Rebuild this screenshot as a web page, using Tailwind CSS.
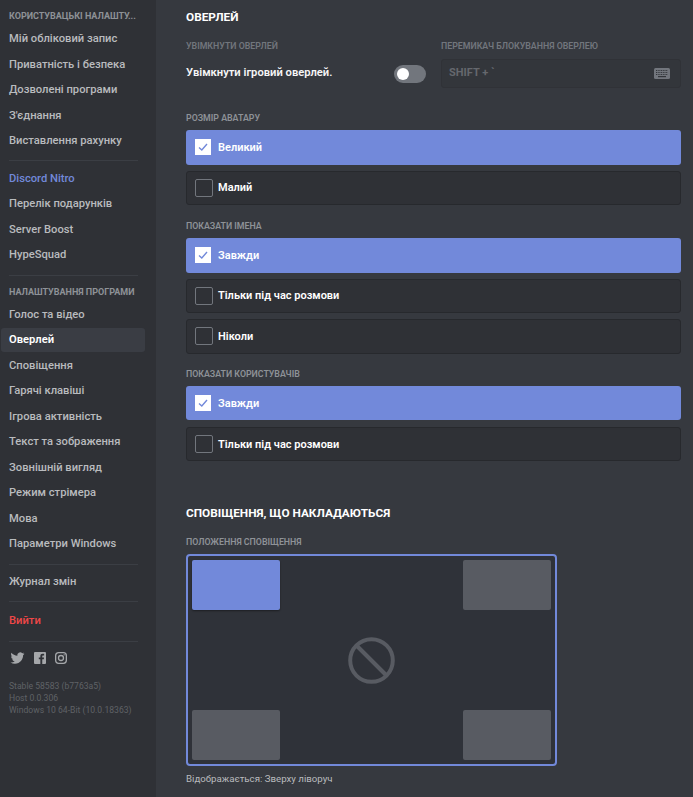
<!doctype html>
<html lang="uk"><head><meta charset="utf-8"><script src="https://cdn.jsdelivr.net/npm/@tailwindcss/browser@4"></script></head>
<body class="m-0 overflow-hidden bg-[#36393f]">
<div class="flex h-[797px] w-[693px] overflow-hidden font-['Roboto','Noto_Sans',sans-serif]">
<nav class="w-[156px] shrink-0 h-full bg-[#2f3136] pl-[1px] pr-[11px] pt-[10px] text-[11.2px] font-medium text-[#b9bbbe]">
  <div class="h-[13px] pl-[8px] text-[9px] font-bold leading-[13px] text-[#8e9297] whitespace-nowrap">КОРИСТУВАЦЬКІ НАЛАШТУ...</div>
  <div class="mt-[4px] flex flex-col gap-[2px] [&>div]:h-[23.5px] [&>div]:pl-[8px] [&>div]:leading-[23.5px]">
    <div>Мій обліковий запис</div><div>Приватність і безпека</div><div>Дозволені програми</div><div>З'єднання</div><div>Виставлення рахунку</div>
  </div>
  <div class="ml-[8px] mr-[7px] mt-[7px] h-px bg-[#3b3e44]"></div>
  <div class="mt-[6px] flex flex-col gap-[2px] [&>div]:h-[23.5px] [&>div]:pl-[8px] [&>div]:leading-[23.5px]">
    <div class="text-[#7289da]">Discord Nitro</div><div>Перелік подарунків</div><div>Server Boost</div><div>HypeSquad</div>
  </div>
  <div class="ml-[8px] mr-[7px] mt-[8px] h-px bg-[#3b3e44]"></div>
  <div class="mt-[10px] h-[13px] pl-[8px] text-[9px] font-bold leading-[13px] text-[#8e9297] whitespace-nowrap">НАЛАШТУВАННЯ ПРОГРАМИ</div>
  <div class="mt-[4px] flex flex-col gap-[2px] [&>div]:h-[23.5px] [&>div]:pl-[8px] [&>div]:leading-[23.5px]">
    <div>Голос та відео</div><div class="rounded-[3px] bg-[#3a3d44] font-semibold text-white">Оверлей</div><div>Сповіщення</div><div>Гарячі клавіші</div><div>Ігрова активність</div><div>Текст та зображення</div><div>Зовнішній вигляд</div><div>Режим стрімера</div><div>Мова</div><div>Параметри Windows</div>
  </div>
  <div class="ml-[8px] mr-[7px] mt-[8px] h-px bg-[#3b3e44]"></div>
  <div class="mt-[5px] h-[23.5px] pl-[8px] leading-[23.5px]">Журнал змін</div>
  <div class="ml-[8px] mr-[7px] mt-[8px] h-px bg-[#3b3e44]"></div>
  <div class="mt-[7px] h-[23.5px] pl-[8px] leading-[23.5px] text-[#f04747]">Вийти</div>
  <div class="ml-[8px] mr-[7px] mt-[8px] h-px bg-[#3b3e44]"></div>
  <div class="mt-[9px] ml-[9px] flex items-center text-[#a5a7aa]">
    <svg class="h-[14px] w-[15px]" viewBox="0 0 24 24" fill="currentColor"><path d="M23.95 4.57a10 10 0 0 1-2.82.77 4.96 4.96 0 0 0 2.16-2.72c-.95.55-2 .96-3.12 1.19a4.92 4.92 0 0 0-8.38 4.48C7.69 8.1 4.07 6.13 1.64 3.16a4.82 4.82 0 0 0-.67 2.48c0 1.7.87 3.21 2.19 4.1a4.9 4.9 0 0 1-2.23-.62v.06a4.92 4.92 0 0 0 3.95 4.83 5 5 0 0 1-2.21.08 4.94 4.94 0 0 0 4.6 3.42A9.87 9.87 0 0 1 0 19.54a14 14 0 0 0 7.56 2.21c9.05 0 14-7.5 14-13.98 0-.21 0-.42-.02-.63a9.94 9.94 0 0 0 2.41-2.57Z"/></svg>
    <svg class="ml-[9px] h-[12px] w-[12px]" viewBox="0 0 24 24" fill="currentColor"><path d="M2 0h20a2 2 0 0 1 2 2v20a2 2 0 0 1-2 2h-5.5v-9.3h3.1l.5-3.6h-3.6V8.8c0-1 .3-1.8 1.8-1.8h1.9V3.8c-.3 0-1.5-.1-2.8-.1-2.8 0-4.7 1.7-4.7 4.8v2.6H9.6v3.6h3.1V24H2a2 2 0 0 1-2-2V2a2 2 0 0 1 2-2Z"/></svg>
    <svg class="ml-[9px] h-[12px] w-[12px]" viewBox="0 0 24 24" fill="none" stroke="currentColor" stroke-width="2.6"><rect x="1.3" y="1.3" width="21.4" height="21.4" rx="6"/><circle cx="12" cy="12" r="5"/><circle cx="18.3" cy="5.7" r=".8" fill="currentColor" stroke-width="1"/></svg>
  </div>
  <div class="mt-[15px] pl-[8px] text-[8.6px] font-normal leading-[12px] text-[#5f6266] whitespace-nowrap">
    <div>Stable 58583 (b7763a5)</div><div>Host 0.0.306</div><div>Windows 10 64-Bit (10.0.18363)</div>
  </div>
</nav>
<main class="flex-1 pl-[30px] pr-[12px] pt-[9px] text-white">
  <h2 class="h-[17px] text-[11.8px] font-bold leading-[17px] uppercase">Оверлей</h2>
  <div class="mt-[14px] flex gap-[15px]">
    <div class="w-[240px]">
      <div class="h-[12px] text-[8.8px] font-semibold leading-[12px] text-[#72767d]">УВІМКНУТИ ОВЕРЛЕЙ</div>
      <div class="mt-[7px] flex h-[29px] items-center justify-between">
        <span class="text-[11.2px] font-semibold text-[#f6f6f7]">Увімкнути ігровий оверлей.</span>
        <span class="flex h-[18px] w-[32px] items-center rounded-full bg-[#72767d] pl-[3px]"><span class="h-[12px] w-[12px] rounded-full bg-white"></span></span>
      </div>
    </div>
    <div class="w-[240px]">
      <div class="h-[12px] text-[8.8px] font-semibold leading-[12px] text-[#72767d] whitespace-nowrap">ПЕРЕМИКАЧ БЛОКУВАННЯ ОВЕРЛЕЮ</div>
      <div class="mt-[7px] flex h-[29px] items-center justify-between rounded-[3px] border border-[#303237] bg-[#33363b] pl-[7px] pr-[10px]">
        <span class="text-[11px] font-bold text-[#65686e]">SHIFT + `</span>
        <svg class="h-[11px] w-[16px]" viewBox="0 0 16 11"><rect width="16" height="11" rx="1.5" fill="#72767d"/><path d="M2 2.5h12M2 4.5h12M2 6.5h12" stroke="#33363b" stroke-width="1" stroke-dasharray="1 .7"/><rect x="4" y="8" width="8" height="1.2" fill="#33363b"/></svg>
      </div>
    </div>
  </div>

  <div class="mt-[24px] h-[12px] text-[8.8px] font-semibold leading-[12px] text-[#8e9297]">РОЗМІР АВАТАРУ</div>
  <div class="mt-[6px] flex flex-col gap-[6px] [&>div]:h-[34.5px] [&>div]:text-[11px] [&>div]:font-semibold">
    <div class="flex items-center rounded-[3px] bg-[#7289da] pl-[9px]"><span class="mr-[7px] flex h-[16px] w-[16px] items-center justify-center bg-white"><svg class="h-[10px] w-[10px]" viewBox="0 0 10 10" fill="none" stroke="#7289da" stroke-width="1.4"><path d="M1 5.5 3.8 8 9 2"/></svg></span><span class="pt-[1px]">Великий</span></div>
    <div class="flex items-center rounded-[3px] border border-[#27292d] bg-[#2f3136] pl-[8px]"><span class="mr-[5px] h-[18px] w-[18px] rounded-[2px] border border-[#72767d]"></span><span class="pt-[1px]">Малий</span></div>
  </div>

  <div class="mt-[15px] h-[12px] text-[8.8px] font-semibold leading-[12px] text-[#8e9297]">ПОКАЗАТИ ІМЕНА</div>
  <div class="mt-[6px] flex flex-col gap-[6px] [&>div]:h-[34.5px] [&>div]:text-[11px] [&>div]:font-semibold">
    <div class="flex items-center rounded-[3px] bg-[#7289da] pl-[9px]"><span class="mr-[7px] flex h-[16px] w-[16px] items-center justify-center bg-white"><svg class="h-[10px] w-[10px]" viewBox="0 0 10 10" fill="none" stroke="#7289da" stroke-width="1.4"><path d="M1 5.5 3.8 8 9 2"/></svg></span><span class="pt-[1px]">Завжди</span></div>
    <div class="flex items-center rounded-[3px] border border-[#27292d] bg-[#2f3136] pl-[8px]"><span class="mr-[5px] h-[18px] w-[18px] rounded-[2px] border border-[#72767d]"></span><span class="pt-[1px]">Тільки під час розмови</span></div>
    <div class="flex items-center rounded-[3px] border border-[#27292d] bg-[#2f3136] pl-[8px]"><span class="mr-[5px] h-[18px] w-[18px] rounded-[2px] border border-[#72767d]"></span><span class="pt-[1px]">Ніколи</span></div>
  </div>

  <div class="mt-[14px] h-[12px] text-[8.8px] font-semibold leading-[12px] text-[#8e9297]">ПОКАЗАТИ КОРИСТУВАЧІВ</div>
  <div class="mt-[6px] flex flex-col gap-[6.5px] [&>div]:h-[34.5px] [&>div]:text-[11px] [&>div]:font-semibold">
    <div class="flex items-center rounded-[3px] bg-[#7289da] pl-[9px]"><span class="mr-[7px] flex h-[16px] w-[16px] items-center justify-center bg-white"><svg class="h-[10px] w-[10px]" viewBox="0 0 10 10" fill="none" stroke="#7289da" stroke-width="1.4"><path d="M1 5.5 3.8 8 9 2"/></svg></span><span class="pt-[2px]">Завжди</span></div>
    <div class="flex items-center rounded-[3px] border border-[#27292d] bg-[#2f3136] pl-[8px]"><span class="mr-[5px] h-[18px] w-[18px] rounded-[2px] border border-[#72767d]"></span><span class="pt-[2px]">Тільки під час розмови</span></div>
  </div>

  <h2 class="mt-[44px] h-[17px] text-[11.8px] font-bold leading-[17px]">СПОВІЩЕННЯ, ЩО НАКЛАДАЮТЬСЯ</h2>
  <div class="mt-[14px] h-[12px] text-[8.8px] font-semibold leading-[12px] text-[#8e9297]">ПОЛОЖЕННЯ СПОВІЩЕННЯ</div>
  <div class="mt-[6px] flex h-[212px] w-[371px] flex-col justify-between rounded-[4px] border-2 border-[#7289da] bg-[#2f3239] p-[4px]">
    <div class="flex justify-between"><div class="h-[50px] w-[88px] rounded-[2px] bg-[#7289da] shadow-[0_1px_2px_rgba(0,0,0,.4)]"></div><div class="h-[50px] w-[88px] rounded-[2px] bg-[#585b62]"></div></div>
    <div class="flex justify-center"><svg class="h-[47px] w-[47px]" viewBox="0 0 47 47" fill="none" stroke="#585b62" stroke-width="4"><circle cx="23.5" cy="23.5" r="21.3"/><path d="M8.5 8.5l30 30"/></svg></div>
    <div class="flex justify-between"><div class="h-[50px] w-[88px] rounded-[2px] bg-[#585b62]"></div><div class="h-[50px] w-[88px] rounded-[2px] bg-[#585b62]"></div></div>
  </div>
  <p class="mt-[6px] text-[9.7px] text-[#b9bbbe]">Відображається: Зверху ліворуч</p>
</main>
</div>
</body></html>
